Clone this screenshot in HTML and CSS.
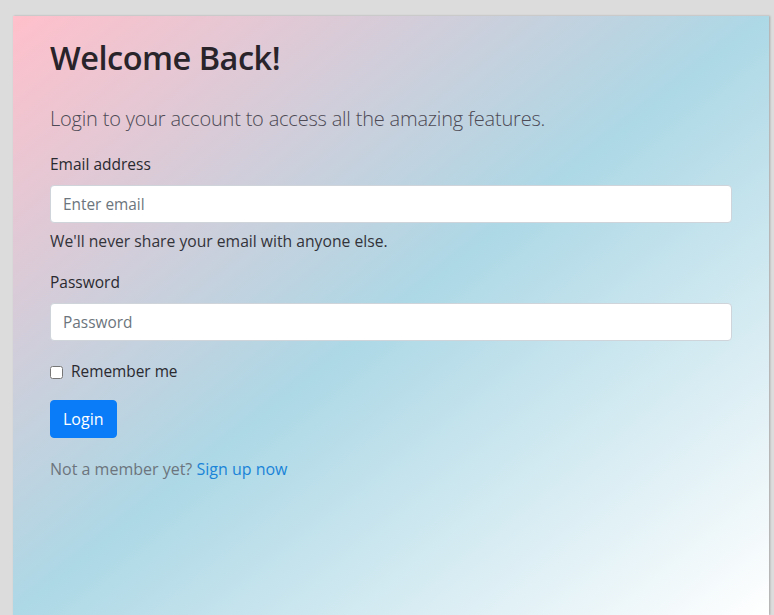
FILE: index.html
```html
<!DOCTYPE html>
<html lang="en">
<head>
<meta charset="utf-8">
<title>Login</title>
<link rel="stylesheet" href="styles.css">
</head>
<body>
<main class="panel">
  <h1 class="title">Welcome Back!</h1>
  <p class="lead">Login to your account to access all the amazing features.</p>
  <form class="form">
    <div class="group group-email">
      <label class="label" for="email">Email address</label>
      <input class="input" type="email" id="email" placeholder="Enter email">
      <small class="help">We'll never share your email with anyone else.</small>
    </div>
    <div class="group group-password">
      <label class="label" for="password">Password</label>
      <input class="input" type="password" id="password" placeholder="Password">
    </div>
    <div class="check">
      <input class="check-input" type="checkbox" id="remember">
      <label class="check-label" for="remember">Remember me</label>
    </div>
    <button class="btn" type="button">Login</button>
  </form>
  <p class="signup">Not a member yet? <a class="link" href="#">Sign up now</a></p>
</main>
</body>
</html>
```

FILE: styles.css
```css
html, body {
  margin: 0;
  height: 100%;
}
body {
  background: #dcdcdc;
  padding: 16px 5px 0 13px;
  box-sizing: border-box;
  font-family: "Open Sans", "Noto Sans", sans-serif;
  color: #212529;
  overflow: hidden;
}
.panel {
  box-sizing: border-box;
  min-height: 100%;
  padding: 22px 37px 40px;
  background: linear-gradient(to bottom right, #ffc0cb 0%, #add8e6 50%, #ffffff 100%);
  box-shadow: 1px 0 2px rgba(0,0,0,0.25);
}
.title {
  margin: 0 0 27px;
  font-size: 32.5px;
  letter-spacing: -0.5px;
  font-weight: 600;
  line-height: 39px;
  color: #29232a;
}
.lead {
  margin: 0 0 18px;
  font-size: 20px;
  letter-spacing: -0.2px;
  font-weight: 300;
  color: #4d4a55;
  line-height: 30px;
}
.form {
  display: flex;
  flex-direction: column;
  align-items: flex-start;
}
.group {
  display: flex;
  flex-direction: column;
  width: 100%;
}
.group-email {
  margin-bottom: 17px;
}
.group-password {
  margin-bottom: 19px;
}
.label {
  font-size: 15.5px;
  line-height: 24px;
  margin-bottom: 9px;
  color: #2a2a30;
}
.input {
  box-sizing: border-box;
  width: 100%;
  height: 38px;
  padding: 6px 12px;
  font-family: inherit;
  font-size: 15.4px;
  border: 1px solid #ced4da;
  border-radius: 4px;
  background: #fff;
  color: #495057;
}
.input::placeholder {
  color: #6c757d;
}
.help {
  margin-top: 6px;
  font-size: 15.7px;
  line-height: 24px;
  color: #33333a;
}
.check {
  display: flex;
  align-items: center;
  gap: 8px;
  margin: 0 0 16px;
}
.check-input {
  margin: 0;
  width: 13px;
  height: 13px;
}
.check-label {
  font-size: 15.4px;
  line-height: 24px;
  color: #2a2a30;
}
.btn {
  font-family: inherit;
  font-size: 16px;
  line-height: 24px;
  height: 38px;
  padding: 6px 12px;
  border: 1px solid #0a7cf8;
  border-radius: 4px;
  background: #0a7cf8;
  color: #fff;
}
.signup {
  margin: 19px 0 0;
  font-size: 16px;
  line-height: 24px;
  color: #6c757d;
}
.link {
  color: #1a84d8;
  text-decoration: none;
}
```
